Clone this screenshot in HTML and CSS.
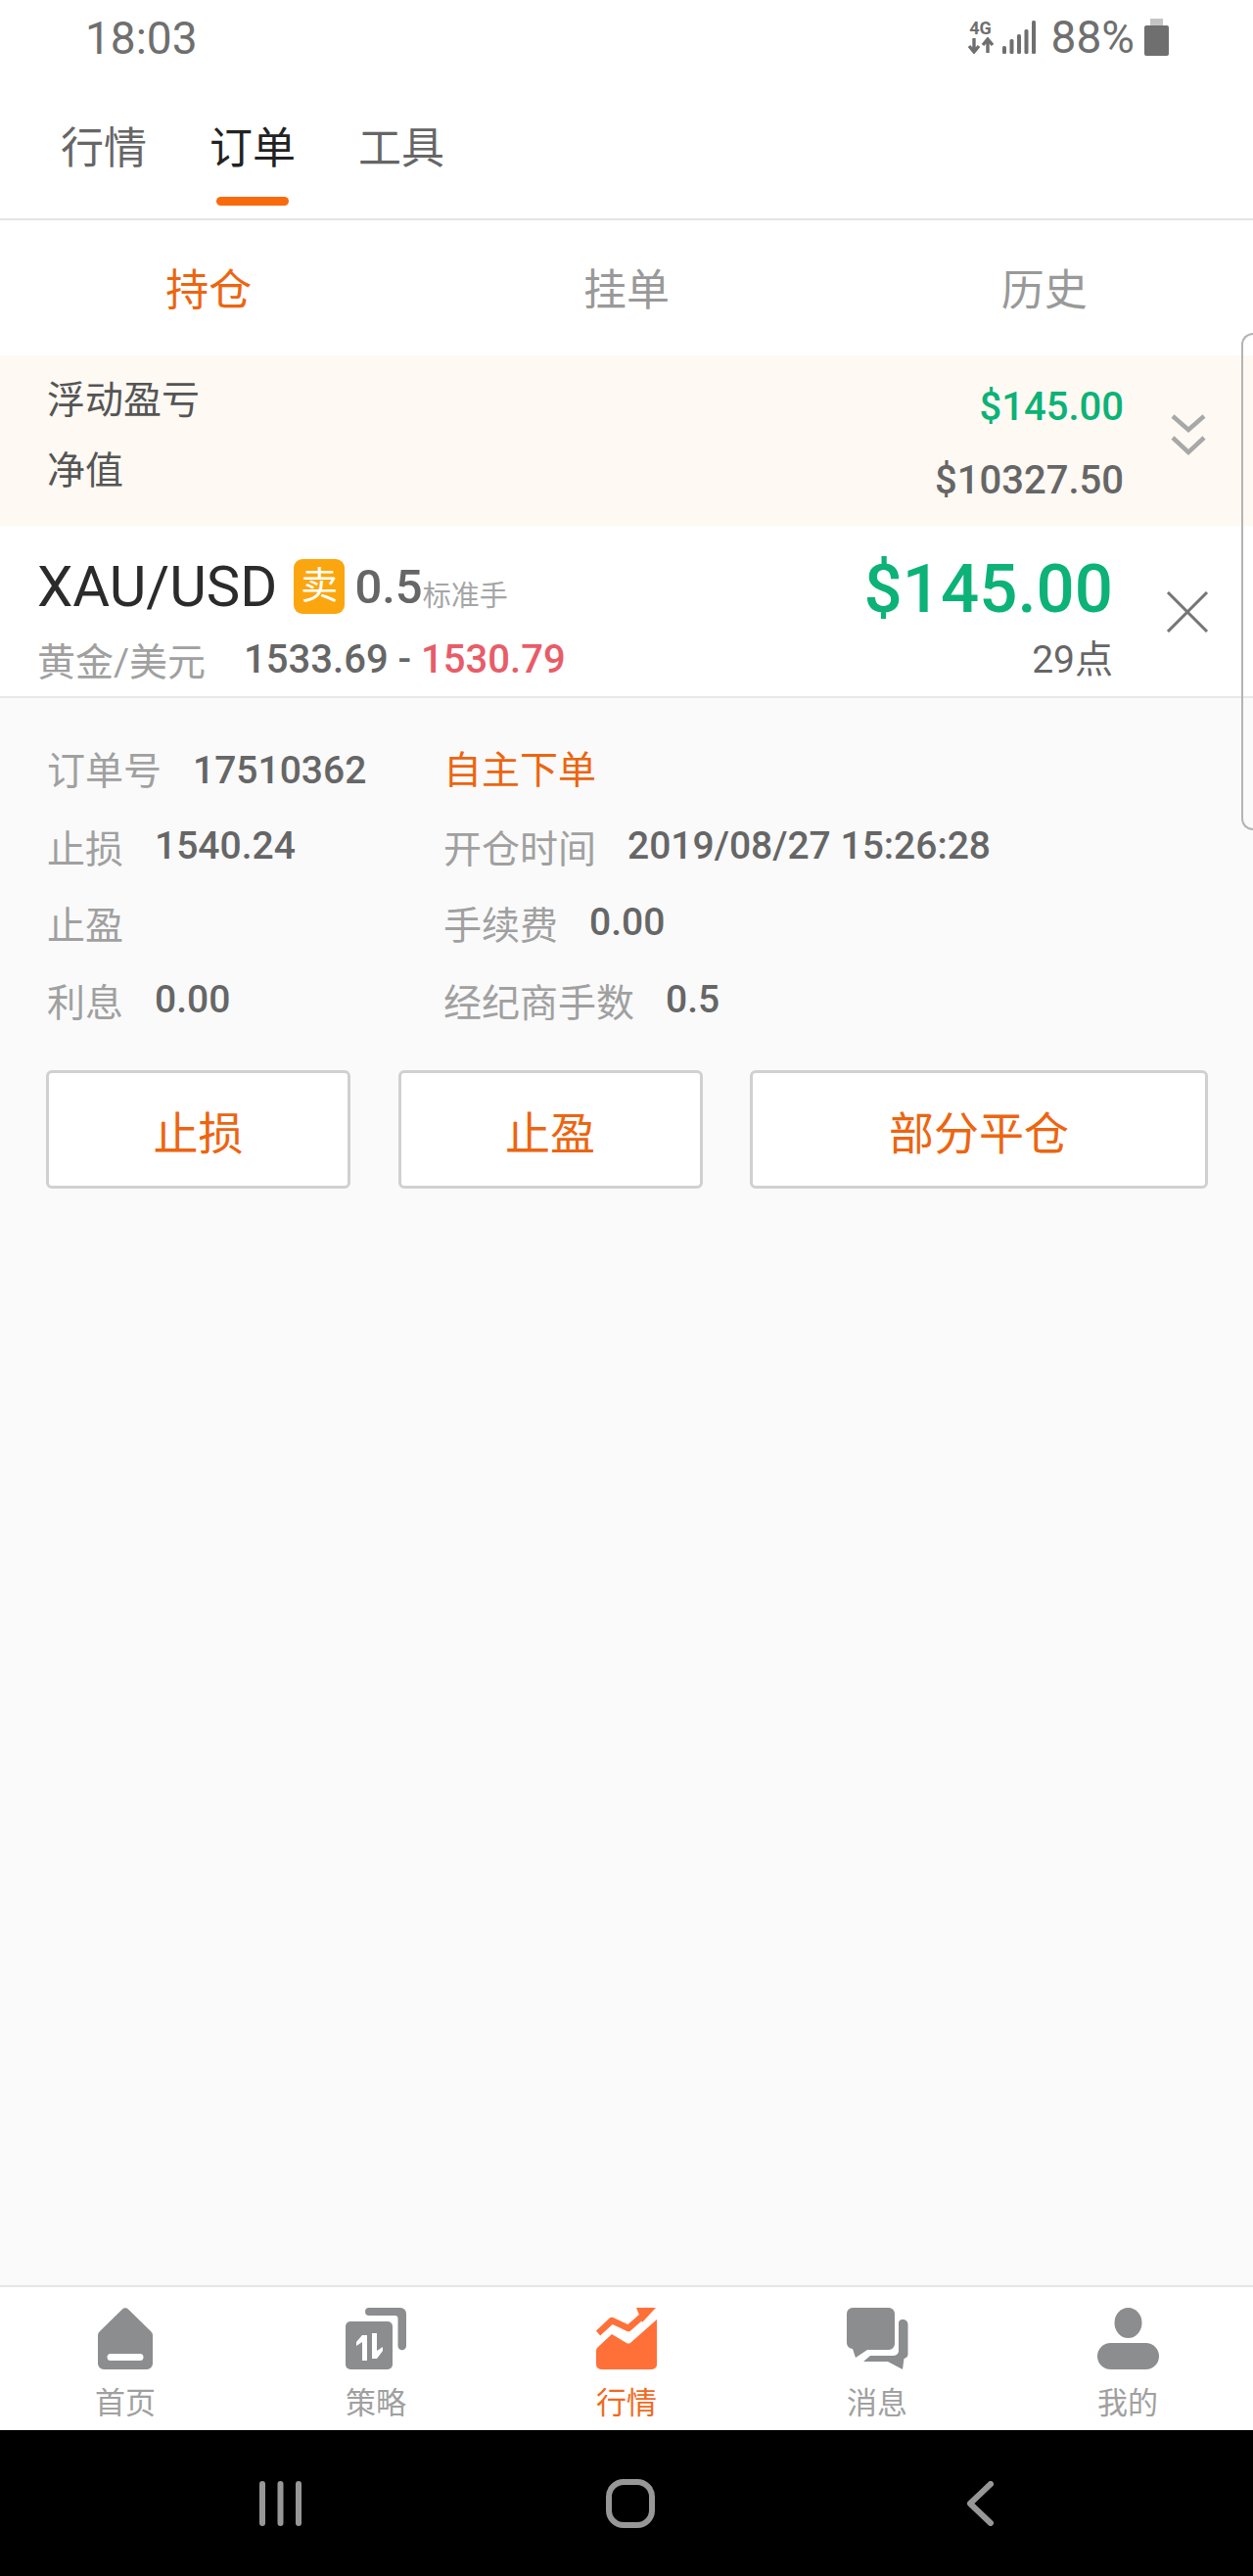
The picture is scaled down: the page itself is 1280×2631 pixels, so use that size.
FILE: index.html
```html
<!DOCTYPE html>
<html lang="zh-CN">
<head>
    <meta charset="UTF-8">
    <meta name="viewport" content="width=device-width, initial-scale=1.0">
    <title>订单</title>
    <link rel="stylesheet" href="styles.css">
</head>
<body>
    <div class="screen">
        <div class="status-bar">
            <span class="clock">18:03</span>
            <div class="status-icons">
                <div class="net">
                    <span class="net-label">4G</span>
                    <svg width="28" height="17" viewBox="0 0 28 17"><path d="M7 1v13M2 9l5 6 5-6M21 16V3M16 8l5-6 5 6" fill="none" stroke="#6f6f6f" stroke-width="3.4"/></svg>
                </div>
                <svg class="signal" width="34" height="34" viewBox="0 0 34 34"><g fill="#6f6f6f"><rect x="0" y="26" width="4" height="8" rx="1.5"/><rect x="7.500" y="19" width="4" height="15" rx="1.500"/><rect x="15" y="14" width="4" height="20" rx="1.500"/><rect x="22.500" y="9" width="4" height="25" rx="1.500"/><rect x="30" y="0" width="4" height="34" rx="1.500"/></g></svg>
                <span class="battery-text">88%</span>
                <svg class="battery" width="26" height="38" viewBox="0 0 26 38"><path d="M6 0h13v7H6z" fill="#c4c4c4"/><path d="M0 9a2 2 0 0 1 2-2h21a2 2 0 0 1 2 2v27a2 2 0 0 1-2 2H2a2 2 0 0 1-2-2z" fill="#6f6f6f"/></svg>
            </div>
        </div>

        <div class="top-tabs">
            <span class="top-tab">行情</span>
            <span class="top-tab top-tab-active">订单</span>
            <span class="top-tab">工具</span>
        </div>

        <div class="sub-tabs">
            <span class="sub-tab sub-tab-active">持仓</span>
            <span class="sub-tab">挂单</span>
            <span class="sub-tab">历史</span>
        </div>

        <div class="summary">
            <div class="summary-labels">
                <span>浮动盈亏</span>
                <span>净值</span>
            </div>
            <div class="summary-values">
                <span class="green">$145.00</span>
                <span>$10327.50</span>
            </div>
            <svg class="chevrons" width="38" height="44" viewBox="0 0 38 44"><path d="M3 3l16 14L35 3M3 25l16 15 16-15" fill="none" stroke="#a8a8a8" stroke-width="4.500"/></svg>
        </div>

        <div class="order">
            <div class="order-main">
                <div class="order-title">
                    <span class="symbol">XAU/USD</span>
                    <span class="side-badge">卖</span>
                    <span class="lots">0.5</span>
                    <span class="lots-unit">标准手</span>
                </div>
                <div class="order-sub">
                    <span class="pair-name">黄金/美元</span>
                    <span class="prices">1533.69 - <span class="red">1530.79</span></span>
                </div>
            </div>
            <div class="order-profit">
                <span class="profit">$145.00</span>
                <span class="points">29点</span>
            </div>
            <svg class="close" width="44" height="42" viewBox="0 0 44 42"><path d="M2 1l40 40M42 1L2 41" fill="none" stroke="#757575" stroke-width="3"/></svg>
        </div>

        <div class="details">
            <div class="info-grid">
                <div class="info-row">
                    <div class="info-cell"><span class="info-label order-no-label">订单号</span><span class="info-value order-no">17510362</span></div>
                    <div class="info-cell"><span class="info-tag">自主下单</span></div>
                </div>
                <div class="info-row">
                    <div class="info-cell"><span class="info-label">止损</span><span class="info-value">1540.24</span></div>
                    <div class="info-cell"><span class="info-label">开仓时间</span><span class="info-value">2019/08/27 15:26:28</span></div>
                </div>
                <div class="info-row">
                    <div class="info-cell"><span class="info-label">止盈</span></div>
                    <div class="info-cell"><span class="info-label">手续费</span><span class="info-value">0.00</span></div>
                </div>
                <div class="info-row">
                    <div class="info-cell"><span class="info-label">利息</span><span class="info-value">0.00</span></div>
                    <div class="info-cell"><span class="info-label">经纪商手数</span><span class="info-value">0.5</span></div>
                </div>
            </div>
            <div class="actions">
                <button class="action">止损</button>
                <button class="action">止盈</button>
                <button class="action action-wide">部分平仓</button>
            </div>
        </div>

        <div class="bottom-nav">
            <div class="nav-item">
                <svg width="56" height="63" viewBox="0 0 56 63"><path fill-rule="evenodd" fill="#8c8d8f" d="M25 1.500a4 4 0 0 1 6 0L54 24a6 6 0 0 1 2 5v28a6 6 0 0 1-6 6H6a6 6 0 0 1-6-6V29a6 6 0 0 1 2-5zM13 47a3.500 3.500 0 0 0 0 7h30a3.500 3.500 0 0 0 0-7z"/></svg>
                <span>首页</span>
            </div>
            <div class="nav-item">
                <svg width="62" height="63" viewBox="0 0 62 63"><path fill="#8c8d8f" d="M24 0h32a6 6 0 0 1 6 6v33a4 4 0 0 1-8.500 0V11a3 3 0 0 0-3-3H24a4 4 0 0 1 0-8z"/><path fill="#8c8d8f" d="M5 14h38a5 5 0 0 1 5 5v39a5 5 0 0 1-5 5H5a5 5 0 0 1-5-5V19a5 5 0 0 1 5-5z"/><path fill="#fff" d="M17 28v26h5V28zM17 28l-6 7v4l6-4zM27 26v26h5V26zM32 52l6-8v-4l-6 4z"/></svg>
                <span>策略</span>
            </div>
            <div class="nav-item nav-item-active">
                <svg width="63" height="63" viewBox="0 0 63 63"><path fill="#ff7039" d="M0 44a5 5 0 0 1 1.500-3.500L16 27l15 9a4 4 0 0 0 5-1L62 12v46a5 5 0 0 1-5 5H5a5 5 0 0 1-5-5z"/><path fill="none" stroke="#ff7039" stroke-width="6.500" stroke-linejoin="round" d="M2 26l14-13 17 8L50 6"/><path fill="#ff7039" d="M41 0h20L47 15z"/></svg>
                <span>行情</span>
            </div>
            <div class="nav-item">
                <svg width="63" height="63" viewBox="0 0 63 63"><path fill="#8c8d8f" d="M6 0h37a6 6 0 0 1 6 6v31a6 6 0 0 1-6 6H21L9 51 6 42a6 6 0 0 1-6-6V6a6 6 0 0 1 6-6z"/><path fill="#8c8d8f" d="M53 15a4 4 0 0 1 4-3 5 5 0 0 1 5.500 5v30a5 5 0 0 1-4 5L57 63 42 55H17l7-6h24a5 5 0 0 0 5-5z"/></svg>
                <span>消息</span>
            </div>
            <div class="nav-item">
                <svg width="63" height="63" viewBox="0 0 63 63"><ellipse cx="31.500" cy="15.500" rx="14" ry="15.500" fill="#8c8d8f"/><rect x="0" y="36" width="63" height="27" rx="13.500" fill="#8c8d8f"/></svg>
                <span>我的</span>
            </div>
        </div>

        <div class="system-nav">
            <svg width="44" height="46" viewBox="0 0 44 46"><g fill="#979797"><rect x="0" y="0" width="6" height="46" rx="3"/><rect x="18.500" y="0" width="6" height="46" rx="3"/><rect x="37" y="0" width="6" height="46" rx="3"/></g></svg>
            <svg width="50" height="50" viewBox="0 0 50 50"><rect x="3" y="3" width="44" height="44" rx="15" fill="none" stroke="#979797" stroke-width="6"/></svg>
            <svg width="28" height="46" viewBox="0 0 28 46"><path d="M25 3L4 23l21 20" fill="none" stroke="#979797" stroke-width="6" stroke-linecap="round" stroke-linejoin="round"/></svg>
        </div>

        <div class="edge-handle"></div>
    </div>
</body>
</html>
```

FILE: styles.css
```css
html, body {
    margin: 0;
    padding: 0;
}
body {
    font-family: Roboto, "Noto Sans CJK SC", sans-serif;
    background-color: #fff;
}
.screen {
    position: relative;
    display: flex;
    flex-direction: column;
    width: 1280px;
    height: 2631px;
    overflow: hidden;
}

/* status bar */
.status-bar {
    display: flex;
    justify-content: space-between;
    align-items: center;
    height: 75px;
    padding: 0 85px 0 87px;
    color: #6f6f6f;
    flex-shrink: 0;
}
.clock {
    font-size: 46px;
    margin-top: 2px;
}
.status-icons {
    display: flex;
    align-items: center;
}
.net {
    display: flex;
    flex-direction: column;
    align-items: center;
    width: 28px;
    margin-right: 8px;
}
.net-label {
    font-size: 18px;
    font-weight: 700;
    line-height: 18px;
}
.signal {
    margin-right: 16px;
}
.battery-text {
    font-size: 46px;
    margin-right: 10px;
}

/* order / tool tabs */
.top-tabs {
    display: flex;
    gap: 64px;
    height: 150px;
    padding-left: 62px;
    border-bottom: 2px solid #e4e4e4;
    box-sizing: border-box;
    flex-shrink: 0;
}
.top-tab {
    position: relative;
    font-size: 44px;
    line-height: 154px;
    height: 148px;
    color: #666;
}
.top-tab-active {
    color: #222;
}
.top-tab-active::after {
    content: "";
    position: absolute;
    left: 7px;
    right: 7px;
    bottom: 13px;
    height: 9px;
    border-radius: 5px;
    background-color: #f96a0c;
}

.sub-tabs {
    display: flex;
    height: 138px;
    flex-shrink: 0;
}
.sub-tab {
    flex: 1;
    text-align: center;
    font-size: 44px;
    line-height: 144px;
    color: #999;
}
.sub-tab-active {
    color: #ec6510;
}

/* floating profit summary */
.summary {
    display: flex;
    align-items: center;
    height: 174px;
    padding: 0 47px 0 48px;
    background-color: #fef9f3;
    flex-shrink: 0;
}
.summary-labels {
    display: flex;
    flex-direction: column;
    gap: 33px;
    font-size: 39px;
    line-height: 39px;
    color: #555;
    margin-top: -9px;
}
.summary-values {
    display: flex;
    flex-direction: column;
    align-items: flex-end;
    gap: 29px;
    margin-left: auto;
    margin-top: 6px;
    font-size: 40px;
    line-height: 46px;
    font-weight: 500;
    color: #666;
}
.green {
    color: #0cb277;
}
.chevrons {
    margin-left: 47px;
    margin-top: -12px;
}

/* order row */
.order {
    display: flex;
    align-items: flex-start;
    height: 176px;
    padding: 0 45px 0 38px;
    border-bottom: 2px solid #e8e8e8;
    box-sizing: border-box;
    flex-shrink: 0;
}
.order-main {
    display: flex;
    flex-direction: column;
    padding-top: 31px;
}
.order-title {
    display: flex;
    align-items: center;
    height: 62px;
}
.symbol {
    font-size: 58px;
    color: #2b2b2b;
}
.side-badge {
    width: 52px;
    height: 56px;
    margin-left: 17px;
    border-radius: 9px;
    background-color: #fca60f;
    color: #fff;
    font-size: 38px;
    line-height: 54px;
    text-align: center;
}
.lots {
    margin-left: 10px;
    font-size: 49px;
    font-weight: 500;
    color: #666;
}
.lots-unit {
    margin-top: 14px;
    font-size: 29px;
    color: #a5a5a5;
}
.order-sub {
    display: flex;
    align-items: center;
    margin-top: 20px;
    height: 46px;
}
.pair-name {
    font-size: 39px;
    color: #a0a0a0;
}
.prices {
    margin-left: 39px;
    font-size: 40px;
    font-weight: 500;
    color: #666;
}
.red {
    color: #e85c68;
}
.order-profit {
    display: flex;
    flex-direction: column;
    align-items: flex-end;
    margin-left: auto;
    padding-top: 25px;
}
.profit {
    font-size: 69px;
    line-height: 80px;
    font-weight: 500;
    color: #0cb277;
}
.points {
    font-size: 39px;
    line-height: 46px;
    margin-top: 9px;
    color: #666;
}
.close {
    margin-left: 54px;
    margin-top: 67px;
}

/* order details */
.details {
    flex: 1;
    padding: 33px 46px 0 48px;
    background-color: #fafafa;
}
.info-row {
    display: flex;
    align-items: center;
    height: 78.500px;
}
.info-cell {
    display: flex;
    align-items: center;
    gap: 32px;
}
.info-cell:first-child {
    width: 405px;
}
.info-label {
    font-size: 39px;
    color: #a0a0a0;
}
.info-value {
    font-size: 39px;
    font-weight: 500;
    color: #666;
}
.order-no-label {
    margin-top: -3px;
}
.order-no {
    margin-top: 4px;
}
.info-tag {
    font-size: 39px;
    color: #ec6510;
    margin-top: -5px;
}
.actions {
    display: flex;
    justify-content: space-between;
    margin: 33px 0 0 -1px;
}
.action {
    flex: none;
    width: 311px;
    height: 121px;
    padding: 0;
    border: 3px solid #d0d0d0;
    border-radius: 6px;
    background-color: #fff;
    font-family: inherit;
    font-size: 46px;
    color: #ec6510;
}
.action-wide {
    width: 468px;
}

/* bottom navigation */
.bottom-nav {
    display: flex;
    height: 148px;
    padding-top: 21px;
    border-top: 2px solid #e6e6e6;
    box-sizing: border-box;
    background-color: #fff;
    flex-shrink: 0;
}
.nav-item {
    flex: 1;
    display: flex;
    flex-direction: column;
    align-items: center;
    font-size: 31px;
    line-height: 36px;
    color: #a0a0a0;
}
.nav-item span {
    margin-top: 17px;
}
.nav-item-active {
    color: #ef6a1e;
}

.system-nav {
    display: flex;
    justify-content: center;
    align-items: center;
    gap: 0;
    height: 149px;
    background-color: #000;
    flex-shrink: 0;
}
.system-nav svg:nth-child(1) {
    margin-right: 310px;
}
.system-nav svg:nth-child(2) {
    margin-right: 318px;
}
.edge-handle {
    position: absolute;
    top: 340px;
    right: 0;
    width: 10px;
    height: 504px;
    border: 2px solid #b4b4b4;
    border-right: none;
    border-radius: 16px 0 0 16px;
}
```
